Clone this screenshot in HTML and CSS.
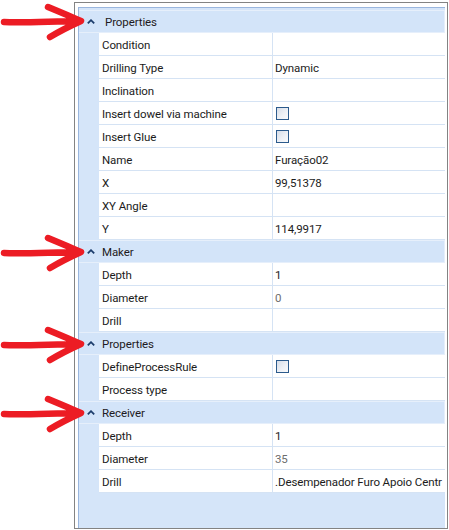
FILE: index.html
```html
<!DOCTYPE html>
<html>
<head>
<meta charset="utf-8">
<link rel="stylesheet" href="styles.css">
</head>
<body>
<div class="stage">
  <div class="grid">
    <div class="inner">
      <div class="cat first"><span class="chev"><svg width="8" height="5" viewBox="0 0 8 5"><path d="M0.8 4.3 L4 1.2 L7.2 4.3" fill="none" stroke="#1d3d6c" stroke-width="1.8"/></svg></span><span class="cat-label">Properties</span></div>
      <div class="row"><div class="name">Condition</div><div class="val"></div></div>
      <div class="row"><div class="name">Drilling Type</div><div class="val">Dynamic</div></div>
      <div class="row"><div class="name">Inclination</div><div class="val"></div></div>
      <div class="row"><div class="name">Insert dowel via machine</div><div class="val"><span class="check"></span></div></div>
      <div class="row"><div class="name">Insert Glue</div><div class="val"><span class="check"></span></div></div>
      <div class="row"><div class="name">Name</div><div class="val">Furação02</div></div>
      <div class="row"><div class="name">X</div><div class="val">99,51378</div></div>
      <div class="row"><div class="name">XY Angle</div><div class="val"></div></div>
      <div class="row"><div class="name">Y</div><div class="val">114,9917</div></div>
      <div class="cat"><span class="chev"><svg width="8" height="5" viewBox="0 0 8 5"><path d="M0.8 4.3 L4 1.2 L7.2 4.3" fill="none" stroke="#1d3d6c" stroke-width="1.8"/></svg></span><span class="cat-label">Maker</span></div>
      <div class="row"><div class="name">Depth</div><div class="val">1</div></div>
      <div class="row"><div class="name">Diameter</div><div class="val ro">0</div></div>
      <div class="row"><div class="name">Drill</div><div class="val"></div></div>
      <div class="cat"><span class="chev"><svg width="8" height="5" viewBox="0 0 8 5"><path d="M0.8 4.3 L4 1.2 L7.2 4.3" fill="none" stroke="#1d3d6c" stroke-width="1.8"/></svg></span><span class="cat-label">Properties</span></div>
      <div class="row"><div class="name">DefineProcessRule</div><div class="val"><span class="check"></span></div></div>
      <div class="row"><div class="name">Process type</div><div class="val"></div></div>
      <div class="cat"><span class="chev"><svg width="8" height="5" viewBox="0 0 8 5"><path d="M0.8 4.3 L4 1.2 L7.2 4.3" fill="none" stroke="#1d3d6c" stroke-width="1.8"/></svg></span><span class="cat-label">Receiver</span></div>
      <div class="row"><div class="name">Depth</div><div class="val">1</div></div>
      <div class="row"><div class="name">Diameter</div><div class="val ro">35</div></div>
      <div class="row"><div class="name">Drill</div><div class="val">.Desempenador Furo Apoio Centr</div></div>
    </div>
  </div>

  <svg class="arrow arrow-1" width="86" height="40" viewBox="0 0 86 40"><path d="M4 20 C25 21 55 19 80 19 M48 5 C60 10 72 15 81 19 C70 24 60 29 50 35" fill="none" stroke="#ec1c24" stroke-width="6.5" stroke-linecap="round" stroke-linejoin="round"/></svg>
  <svg class="arrow arrow-2" width="86" height="40" viewBox="0 0 86 40"><path d="M4 20 C25 21 55 19 80 19 M48 5 C60 10 72 15 81 19 C70 24 60 29 50 35" fill="none" stroke="#ec1c24" stroke-width="6.5" stroke-linecap="round" stroke-linejoin="round"/></svg>
  <svg class="arrow arrow-3" width="86" height="40" viewBox="0 0 86 40"><path d="M4 20 C25 21 55 19 80 19 M48 5 C60 10 72 15 81 19 C70 24 60 29 50 35" fill="none" stroke="#ec1c24" stroke-width="6.5" stroke-linecap="round" stroke-linejoin="round"/></svg>
  <svg class="arrow arrow-4" width="86" height="40" viewBox="0 0 86 40"><path d="M4 20 C25 21 55 19 80 19 M48 5 C60 10 72 15 81 19 C70 24 60 29 50 35" fill="none" stroke="#ec1c24" stroke-width="6.5" stroke-linecap="round" stroke-linejoin="round"/></svg>
</div>
</body>
</html>
```

FILE: styles.css
```css
* { box-sizing: border-box; }
html, body { margin: 0; padding: 0; background: #ffffff; }
body {
  width: 449px;
  height: 530px;
  overflow: hidden;
  font-family: "Roboto", "Noto Sans", sans-serif;
  font-size: 11.5px;
  letter-spacing: -0.1px;
  color: #1b1b1b;
}
.stage {
  position: relative;
  width: 449px;
  height: 530px;
  padding: 2px 0 0 74px;
}
.grid {
  width: 374px;
  height: 527px;
  border: 1px solid #838383;
  background: #ffffff;
  padding: 4px 2px 0 3px;
}
.inner {
  height: 100%;
  background: #d5e5f9;
  border-top: 1px solid #9ab6de;
  border-left: 1px solid #9ab6de;
  padding-top: 2px;
  display: flex;
  flex-direction: column;
}
.cat {
  height: 23px;
  flex: none;
  display: flex;
  align-items: center;
  background: #d3e4f9;
  border-top: 1px solid #e6effb;
  border-right: 1px solid #e6effb;
  border-bottom: 1px solid #e6effb;
}
.chev {
  width: 23px;
  display: flex;
  justify-content: center;
  padding-left: 1px;
  padding-bottom: 1px;
}
.chev svg { display: block; }
.cat-label { color: #1e1a22; padding-top: 1px; }
.cat.first .cat-label { padding-left: 3px; }
.row {
  height: 23px;
  flex: none;
  display: grid;
  grid-template-columns: 20px 174px 1fr;
}
.row::before { content: ""; }
.name, .val {
  background: #ffffff;
  border-bottom: 1px solid #d5e3f4;
  padding-left: 3px;
  padding-top: 1px;
  display: flex;
  align-items: center;
  white-space: nowrap;
  overflow: hidden;
}
.name { border-right: 1px solid #d5e3f4; }
.val { padding-left: 2px; }
.val.ro { color: #6d6d6d; }
.check {
  display: block;
  width: 13px;
  height: 13px;
  margin-left: 1px;
  margin-top: -1px;
  border: 1px solid #2b5a8c;
  background: linear-gradient(135deg, #d6dde8 0%, #eef1f6 60%, #f8f9fb 100%);
}
.arrow { position: absolute; left: 0; }
.arrow-1 { top: 2px; }
.arrow-2 { top: 233px; }
.arrow-3 { top: 325px; }
.arrow-4 { top: 394px; }
```
